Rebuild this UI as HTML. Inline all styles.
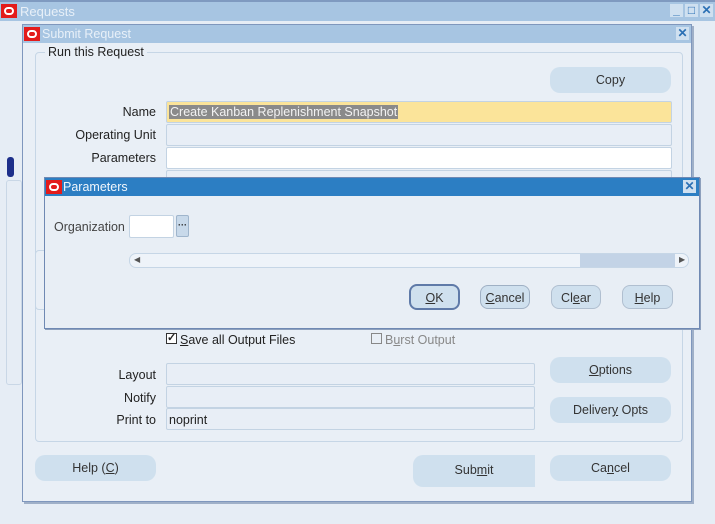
<!DOCTYPE html>
<html><head><style>
*{box-sizing:border-box;margin:0;padding:0}
body{width:715px;height:524px;overflow:hidden;background:#e6edf5;font-family:"Liberation Sans",sans-serif;font-size:12px;color:#222;position:relative}
.a{position:absolute}
.tb{background:#a7c5e2;color:#eef4fa}
.logo{position:absolute;width:16px;height:14px;background:#e31b1b}
.logo:after{content:"";position:absolute;left:3px;top:3px;width:10px;height:8px;border:2px solid #fff;border-radius:4px;box-sizing:border-box}
.btn{position:absolute;background:#cfe0ee;border-radius:10px;text-align:center;color:#333;font-size:12.5px}
.fld{position:absolute;border:1px solid #c3d3e3;background:#e8eef6;border-radius:2px}
.lbl{position:absolute;text-align:right;font-size:12.5px}
.x{position:absolute;width:13px;height:13px;background:#cfe0f0;color:#2a6fb4;font-size:12px;font-weight:bold;line-height:13px;text-align:center}
</style></head><body>
<!-- outer window -->
<div class="a tb" style="left:0;top:0;width:715px;height:21px;border-top:2px solid #7f9ac0"></div>
<div class="logo" style="left:1px;top:4px"></div>
<div class="a" style="left:20px;top:4px;color:#e8f0f8;font-size:13px">Requests</div>
<div class="x" style="left:670px;top:4px">_</div><div class="x" style="left:685px;top:4px">□</div><div class="x" style="left:700px;top:4px">✕</div>
<div class="a" style="left:7px;top:157px;width:7px;height:20px;background:#1d2f8a;border-radius:3px"></div>
<div class="a" style="left:6px;top:180px;width:16px;height:205px;border:1px solid #c9d7e6;border-radius:3px"></div>
<!-- submit request -->
<div class="a" style="left:22px;top:24px;width:670px;height:478px;background:#e9eff6;border:1px solid #7f97bd;box-shadow:2px 2px 0 #9fb0c8"></div>
<div class="a tb" style="left:23px;top:25px;width:668px;height:18px"></div>
<div class="logo" style="left:24px;top:27px"></div>
<div class="a" style="left:42px;top:27px;color:#e8f0f8;font-size:12.5px">Submit Request</div>
<div class="x" style="left:676px;top:27px">✕</div>
<div class="a" style="left:35px;top:52px;width:648px;height:390px;border:1px solid #c6d6e6;border-radius:4px"></div>
<div class="a" style="left:45px;top:45px;background:#e9eff6;padding:0 3px;font-size:12.5px">Run this Request</div>
<div class="btn" style="left:550px;top:67px;width:121px;height:26px;line-height:26px">Copy</div>
<div class="lbl" style="left:40px;top:105px;width:116px">Name</div>
<div class="fld" style="left:166px;top:101px;width:506px;height:22px;background:#fbe49a"><span style="position:absolute;left:2px;top:3px;background:#8a8a8a;color:#f2f2f2;font-size:12.5px;padding:0 1px">Create Kanban Replenishment Snapshot</span></div>
<div class="lbl" style="left:40px;top:128px;width:116px">Operating Unit</div>
<div class="fld" style="left:166px;top:124px;width:506px;height:22px"></div>
<div class="lbl" style="left:40px;top:151px;width:116px">Parameters</div>
<div class="fld" style="left:166px;top:147px;width:506px;height:22px;background:#fff"></div>
<div class="fld" style="left:166px;top:170px;width:506px;height:10px"></div>
<div class="a" style="left:35px;top:250px;width:20px;height:60px;border:1px solid #c6d6e6;border-radius:4px"></div>
<!-- parameters dialog -->
<div class="a" style="left:44px;top:177px;width:656px;height:152px;background:#e8eef5;border:1px solid #6f89b3;box-shadow:1px 1px 0 #8da0bd"></div>
<div class="a" style="left:45px;top:178px;width:654px;height:18px;background:#2c7ec3"></div>
<div class="logo" style="left:46px;top:180px"></div>
<div class="a" style="left:63px;top:180px;color:#f0f6fc;font-size:12.5px">Parameters</div>
<div class="x" style="left:683px;top:180px">✕</div>
<div class="a" style="left:54px;top:220px;color:#444;font-size:12.5px">Organization</div>
<div class="a" style="left:129px;top:215px;width:45px;height:23px;background:#fff;border:1px solid #c3d3e3;border-radius:2px"></div>
<div class="a" style="left:176px;top:215px;width:13px;height:22px;background:#c8d9ea;border:1px solid #9fb5cc;border-radius:2px;font-size:9px;text-align:center;line-height:18px;font-weight:bold">···</div>
<div class="a" style="left:129px;top:253px;width:560px;height:15px;background:#eef3f9;border:1px solid #c6d6e6;border-radius:7px"></div>
<div class="a" style="left:580px;top:254px;width:95px;height:13px;background:#c3d3e6"></div>
<div class="a" style="left:134px;top:255px;font-size:8px;color:#555">◀</div>
<div class="a" style="left:679px;top:255px;font-size:8px;color:#555">▶</div>
<div class="btn" style="left:409px;top:284px;width:51px;height:26px;line-height:24px;border:2px solid #5f7aa8;border-radius:8px"><u>O</u>K</div>
<div class="btn" style="left:480px;top:285px;width:50px;height:24px;line-height:24px;border:1px solid #9fb0c4;border-radius:8px"><u>C</u>ancel</div>
<div class="btn" style="left:551px;top:285px;width:50px;height:24px;line-height:24px;border:1px solid #b0bfd0;border-radius:8px">Cl<u>e</u>ar</div>
<div class="btn" style="left:622px;top:285px;width:51px;height:24px;line-height:24px;border:1px solid #b0bfd0;border-radius:8px"><u>H</u>elp</div>
<!-- lower -->
<div class="a" style="left:166px;top:333px;width:11px;height:11px;border:1px solid #333;background:#fff;font-size:11px;line-height:9px;text-align:center;font-weight:bold">✓</div>
<div class="a" style="left:180px;top:333px;font-size:12.5px"><u>S</u>ave all Output Files</div>
<div class="a" style="left:371px;top:333px;width:11px;height:11px;border:1px solid #888"></div>
<div class="a" style="left:385px;top:333px;font-size:12.5px;color:#888">B<u>u</u>rst Output</div>
<div class="lbl" style="left:40px;top:368px;width:116px">Layout</div>
<div class="fld" style="left:166px;top:363px;width:369px;height:22px"></div>
<div class="lbl" style="left:40px;top:391px;width:116px">Notify</div>
<div class="fld" style="left:166px;top:386px;width:369px;height:22px"></div>
<div class="lbl" style="left:40px;top:413px;width:116px">Print to</div>
<div class="fld" style="left:166px;top:408px;width:369px;height:22px"><span style="position:absolute;left:2px;top:4px;font-size:12.5px">noprint</span></div>
<div class="btn" style="left:550px;top:357px;width:121px;height:26px;line-height:26px"><u>O</u>ptions</div>
<div class="btn" style="left:550px;top:397px;width:121px;height:26px;line-height:26px">Deliver<u>y</u> Opts</div>
<div class="btn" style="left:35px;top:455px;width:121px;height:26px;line-height:26px">Help (<u>C</u>)</div>
<div class="btn" style="left:413px;top:455px;width:122px;height:32px;line-height:30px;border-radius:10px 0 0 10px">Sub<u>m</u>it</div>
<div class="btn" style="left:550px;top:455px;width:121px;height:26px;line-height:26px">Ca<u>n</u>cel</div>
</body></html>
